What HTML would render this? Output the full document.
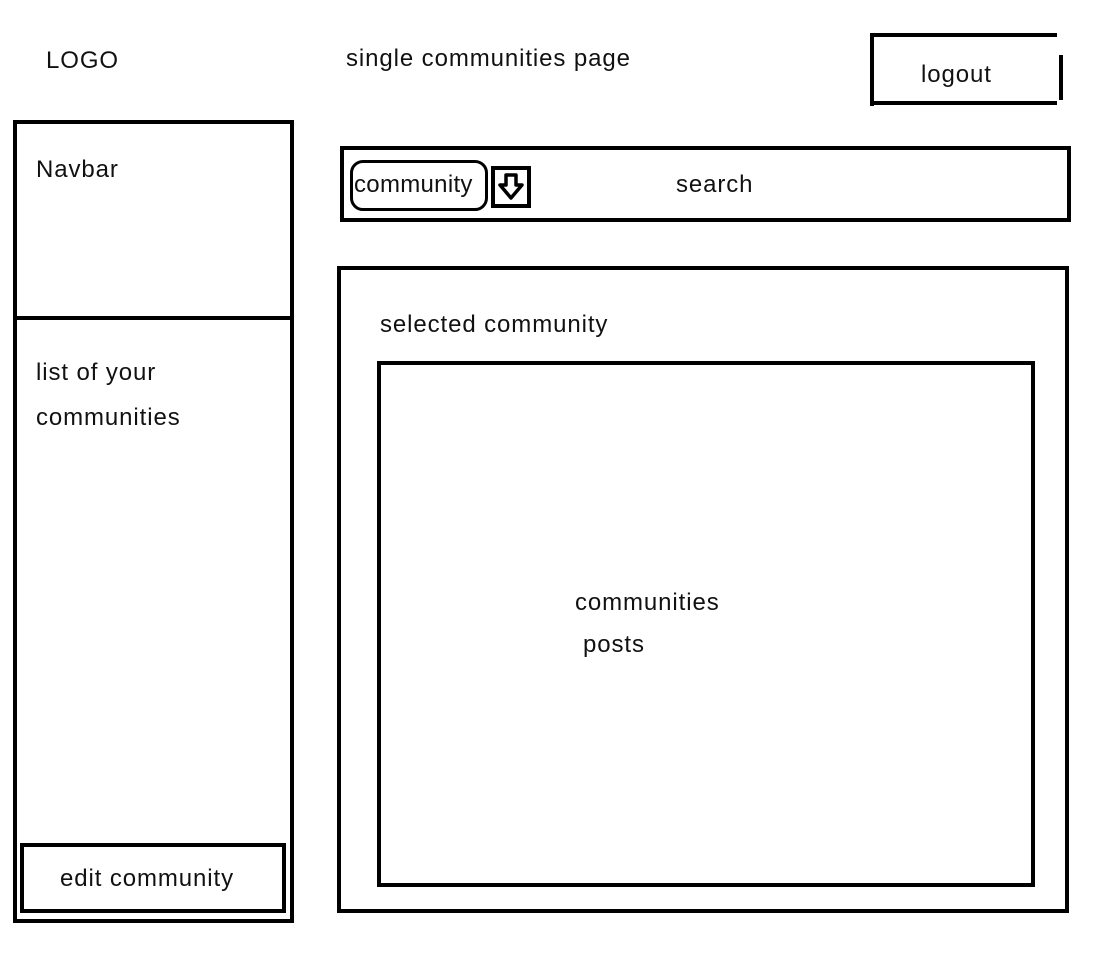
<!DOCTYPE html>
<html><head><style>
body{margin:0;width:1106px;height:955px;background:#fff;position:relative;font-family:"Liberation Sans",sans-serif;color:#111;overflow:hidden}
.a{position:absolute}
.b{position:absolute;box-sizing:border-box;border:4px solid #000}
.t{position:absolute;font-size:24px;letter-spacing:0.9px;white-space:nowrap}
.l{position:absolute;background:#000}
</style></head><body>
<div class="t" style="left:46px;top:47px">LOGO</div>
<div class="t" style="left:346px;top:45px">single communities page</div>
<div class="l" style="left:870px;top:33px;width:187px;height:4px"></div>
<div class="l" style="left:870px;top:33px;width:4px;height:73px"></div>
<div class="l" style="left:870px;top:101px;width:187px;height:4px"></div>
<div class="l" style="left:1059px;top:55px;width:4px;height:45px"></div>
<div class="t" style="left:921px;top:61px">logout</div>

<div class="b" style="left:13px;top:120px;width:281px;height:803px"></div>
<div class="l" style="left:13px;top:316px;width:280px;height:4px"></div>
<div class="t" style="left:36px;top:156px">Navbar</div>
<div class="t" style="left:36px;top:350px;line-height:45px">list of your<br>communities</div>
<div class="b" style="left:20px;top:843px;width:266px;height:70px"></div>
<div class="t" style="left:60px;top:865px">edit community</div>

<div class="b" style="left:340px;top:146px;width:731px;height:76px"></div>
<div class="b" style="left:350px;top:160px;width:138px;height:51px;border-radius:13px;border-width:3px"></div>
<div class="t" style="left:354px;top:171px;letter-spacing:0.3px">community</div>
<div class="b" style="left:491px;top:166px;width:40px;height:42px"></div>
<svg class="a" style="left:498px;top:173px" width="26" height="28" viewBox="0 0 26 28"><path d="M8 2h10v10h6L13 25 2 12h6z" fill="#fff" stroke="#000" stroke-width="3.5" stroke-linejoin="round"/></svg>
<div class="t" style="left:676px;top:171px">search</div>

<div class="b" style="left:337px;top:266px;width:732px;height:647px"></div>
<div class="t" style="left:380px;top:311px">selected community</div>
<div class="b" style="left:377px;top:361px;width:658px;height:526px"></div>
<div class="t" style="left:575px;top:589px">communities</div>
<div class="t" style="left:583px;top:631px">posts</div>
</body></html>
